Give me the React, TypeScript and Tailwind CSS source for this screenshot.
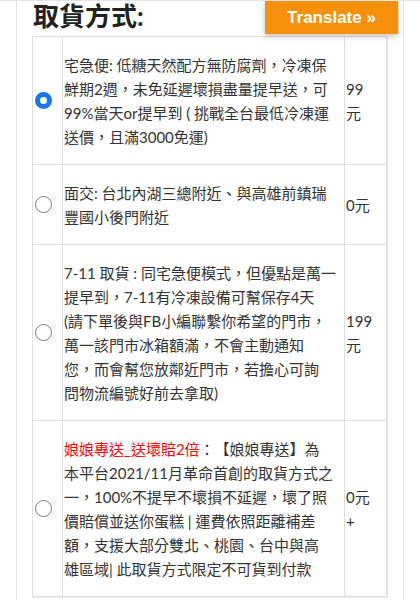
import React from 'react';

type Row = {
    lines: React.ReactNode[];
    price: string[];
    checked?: boolean;
};

const rows: Row[] = [
    {
        checked: true,
        lines: [
            '宅急便: 低糖天然配方無防腐劑，冷凍保',
            '鮮期2週，未免延遲壞損盡量提早送，可',
            '99%當天or提早到 ( 挑戰全台最低冷凍運',
            '送價，且滿3000免運)',
        ],
        price: ['99', '元'],
    },
    {
        lines: ['面交: 台北內湖三總附近、與高雄前鎮瑞', '豐國小後門附近'],
        price: ['0元'],
    },
    {
        lines: [
            '7-11 取貨 : 同宅急便模式，但優點是萬一',
            '提早到，7-11有冷凍設備可幫保存4天',
            '(請下單後與FB小編聯繫你希望的門市，',
            '萬一該門市冰箱額滿，不會主動通知',
            '您，而會幫您放鄰近門市，若擔心可詢',
            '問物流編號好前去拿取)',
        ],
        price: ['199', '元'],
    },
    {
        lines: [
            <>
                <span className="text-[#ff0000]">娘娘專送_送壞賠2倍</span>：【娘娘專送】為
            </>,
            '本平台2021/11月革命首創的取貨方式之',
            '一，100%不提早不壞損不延遲，壞了照',
            '價賠償並送你蛋糕 | 運費依照距離補差',
            '額，支援大部分雙北、桃園、台中與高',
            '雄區域| 此取貨方式限定不可貨到付款',
        ],
        price: ['0元', '+'],
    },
];

function Radio({ checked }: { checked?: boolean }) {
    return checked ? (
        <span className="block w-[17px] h-[17px] rounded-full border-[5px] border-[#1677f0] bg-white" />
    ) : (
        <span className="block w-[17px] h-[17px] rounded-full border-[1.5px] border-[#767676] bg-white" />
    );
}

export default function App() {
    return (
        <div
            className="relative w-[420px] h-[600px] overflow-hidden bg-white border-t border-[#e4e4e4] text-[#333] [text-spacing-trim:space-all]"
            style={{ fontFamily: '"Lato", "Noto Sans CJK TC", sans-serif' }}
        >
            <div className="ml-4 w-[388px] h-full border-l border-r border-[#e2e2e2] pl-[15px]">
                <h2 className="h-[35px] leading-[30px] text-[26px] font-bold text-[#222] pl-[1px]">
                    取貨方式:
                </h2>
                <table className="w-[355px] border-collapse shadow-[1px_1px_0_#e6e6e6] text-[15px] leading-6">
                    <tbody>
                        {rows.map((row, i) => (
                            <tr key={i}>
                                <td className="w-[30px] border border-[#dddddd] align-middle pl-[2px]">
                                    <Radio checked={row.checked} />
                                </td>
                                <td className="w-[282px] border border-[#dddddd] align-middle pt-4 pb-[15px] pl-[1px] pr-1 whitespace-nowrap">
                                    {row.lines.map((line, j) => (
                                        <div key={j}>{line}</div>
                                    ))}
                                </td>
                                <td className="border border-[#dddddd] align-middle pl-[1px]">
                                    {row.price.map((p, j) => (
                                        <div key={j}>{p}</div>
                                    ))}
                                </td>
                            </tr>
                        ))}
                    </tbody>
                </table>
            </div>
            <div
                className="absolute top-0 right-[22px] w-[133px] h-[33px] bg-[#f7900a] text-white text-[17px] font-bold flex items-center justify-center shadow-[0_2px_6px_rgba(0,0,0,0.25)]"
                style={{ fontFamily: '"Liberation Sans", Arial, sans-serif' }}
            >
                Translate »
            </div>
        </div>
    );
}
